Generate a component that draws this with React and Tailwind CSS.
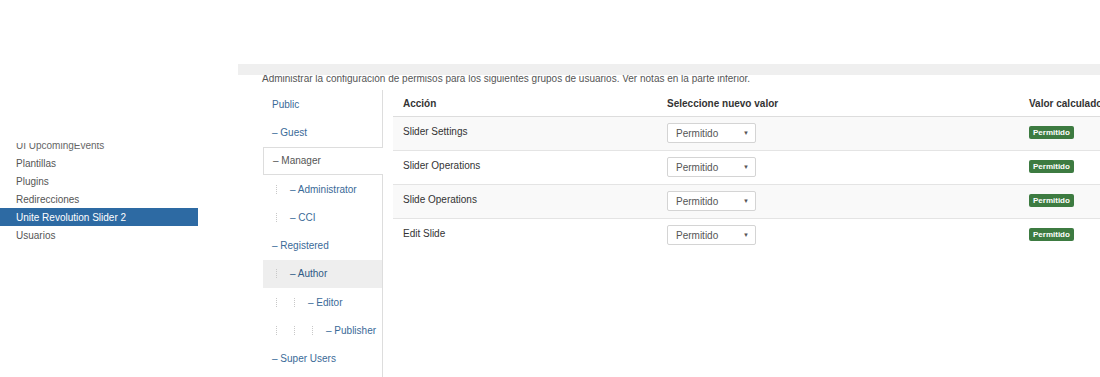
const menu = ["Plantillas", "Plugins", "Redirecciones", "Unite Revolution Slider 2", "Usuarios"];

const groups = [
  { name: "Public", depth: 0, plain: true },
  { name: "Guest", depth: 0 },
  { name: "Manager", depth: 0, active: true },
  { name: "Administrator", depth: 1 },
  { name: "CCI", depth: 1 },
  { name: "Registered", depth: 0 },
  { name: "Author", depth: 1, hover: true },
  { name: "Editor", depth: 2 },
  { name: "Publisher", depth: 3 },
  { name: "Super Users", depth: 0 },
];

const actions = ["Slider Settings", "Slider Operations", "Slide Operations", "Edit Slide"];

function Dots({ count }) {
  return Array.from({ length: count }).map((_, i) => (
    <span key={i} className="inline-block h-[9px] w-[18px] shrink-0">
      <span className="block h-[9px] w-0 border-l border-dotted border-[#c8c8c8] ml-[4px]" />
    </span>
  ));
}

function GroupTab({ g }) {
  let cls = "flex items-center h-[28.3px] pl-[9px] text-[10px] ";
  if (g.active) cls += "bg-white border border-r-0 border-[#ddd] -mr-px text-[#555] relative";
  else if (g.hover) cls += "bg-[#eeeeee] text-[#2f5a85]";
  else cls += "text-[#3a6a98]";
  return (
    <div className={cls}>
      <Dots count={g.depth} />
      <span>{g.plain ? g.name : `– ${g.name}`}</span>
    </div>
  );
}

export default function App() {
  return (
    <div className="w-[1100px] h-[377px] overflow-hidden bg-white flex" style={{ fontFamily: '"Liberation Sans", Arial, sans-serif' }}>
      {/* Sidebar */}
      <div className="w-[198px] shrink-0">
        <div className="mt-[143px] overflow-hidden">
          <div className="-mt-[7px] h-[18px] flex items-center pl-[16px] text-[10px] text-[#666]">UI UpcomingEvents</div>
          {menu.map((m) => (
            <div
              key={m}
              className={
                m === "Unite Revolution Slider 2"
                  ? "h-[18px] flex items-center pl-[16px] text-[10px] bg-[#2d6aa3] text-white"
                  : "h-[18px] flex items-center pl-[16px] text-[10px] text-[#555]"
              }
            >
              {m}
            </div>
          ))}
        </div>
      </div>

      {/* Main */}
      <div className="ml-[40px] flex-1 min-w-0">
        <div className="mt-[64px] h-[11px] bg-[#efefef]" />
        <div className="h-[9px] overflow-hidden">
          <p className="-mt-[2px] ml-[24px] text-[10px] leading-[12px] text-[#555] whitespace-nowrap">
            Administrar la configuración de permisos para los siguientes grupos de usuarios. Ver notas en la parte inferior.
          </p>
        </div>

        <div className="mt-[6px] ml-[25px] flex">
          {/* Group tabs */}
          <div className="w-[120px] shrink-0 border-r border-[#ddd] h-[290px]">
            {groups.map((g) => (
              <GroupTab key={g.name} g={g} />
            ))}
          </div>

          {/* Table */}
          <div className="ml-[10px] w-[760px] shrink-0 text-[10px] text-[#333]">
            <div className="grid grid-cols-[264px_362px_1fr] h-[27px] items-center font-bold border-b border-[#ddd]">
              <div className="pl-[10px]">Acción</div>
              <div className="pl-[10px]">Seleccione nuevo valor</div>
              <div className="pl-[10px]">Valor calculado</div>
            </div>
            {actions.map((a, i) => (
              <div
                key={a}
                className={
                  "grid grid-cols-[264px_362px_1fr] h-[34px] " +
                  (i < actions.length - 1 ? "border-b border-[#e4e4e4] " : "") +
                  (i % 2 === 0 ? "bg-[#f9f9f9]" : "bg-white")
                }
              >
                <div className="pl-[10px] pt-[7px]">{a}</div>
                <div className="pl-[10px] pt-[6px]">
                  <div className="w-[89px] h-[20px] bg-white border border-[#d4d4d4] rounded-[2px] flex items-center justify-between pl-[8px] pr-[6px] text-[#555]">
                    <span>Permitido</span>
                    <span className="text-[6px]">▼</span>
                  </div>
                </div>
                <div className="pl-[10px] pt-[7px]">
                  <span className="inline-block bg-[#3d7b41] text-white font-bold text-[8px] leading-[13px] px-[4px] rounded-[2px]">
                    Permitido
                  </span>
                </div>
              </div>
            ))}
          </div>
        </div>
      </div>
    </div>
  );
}
